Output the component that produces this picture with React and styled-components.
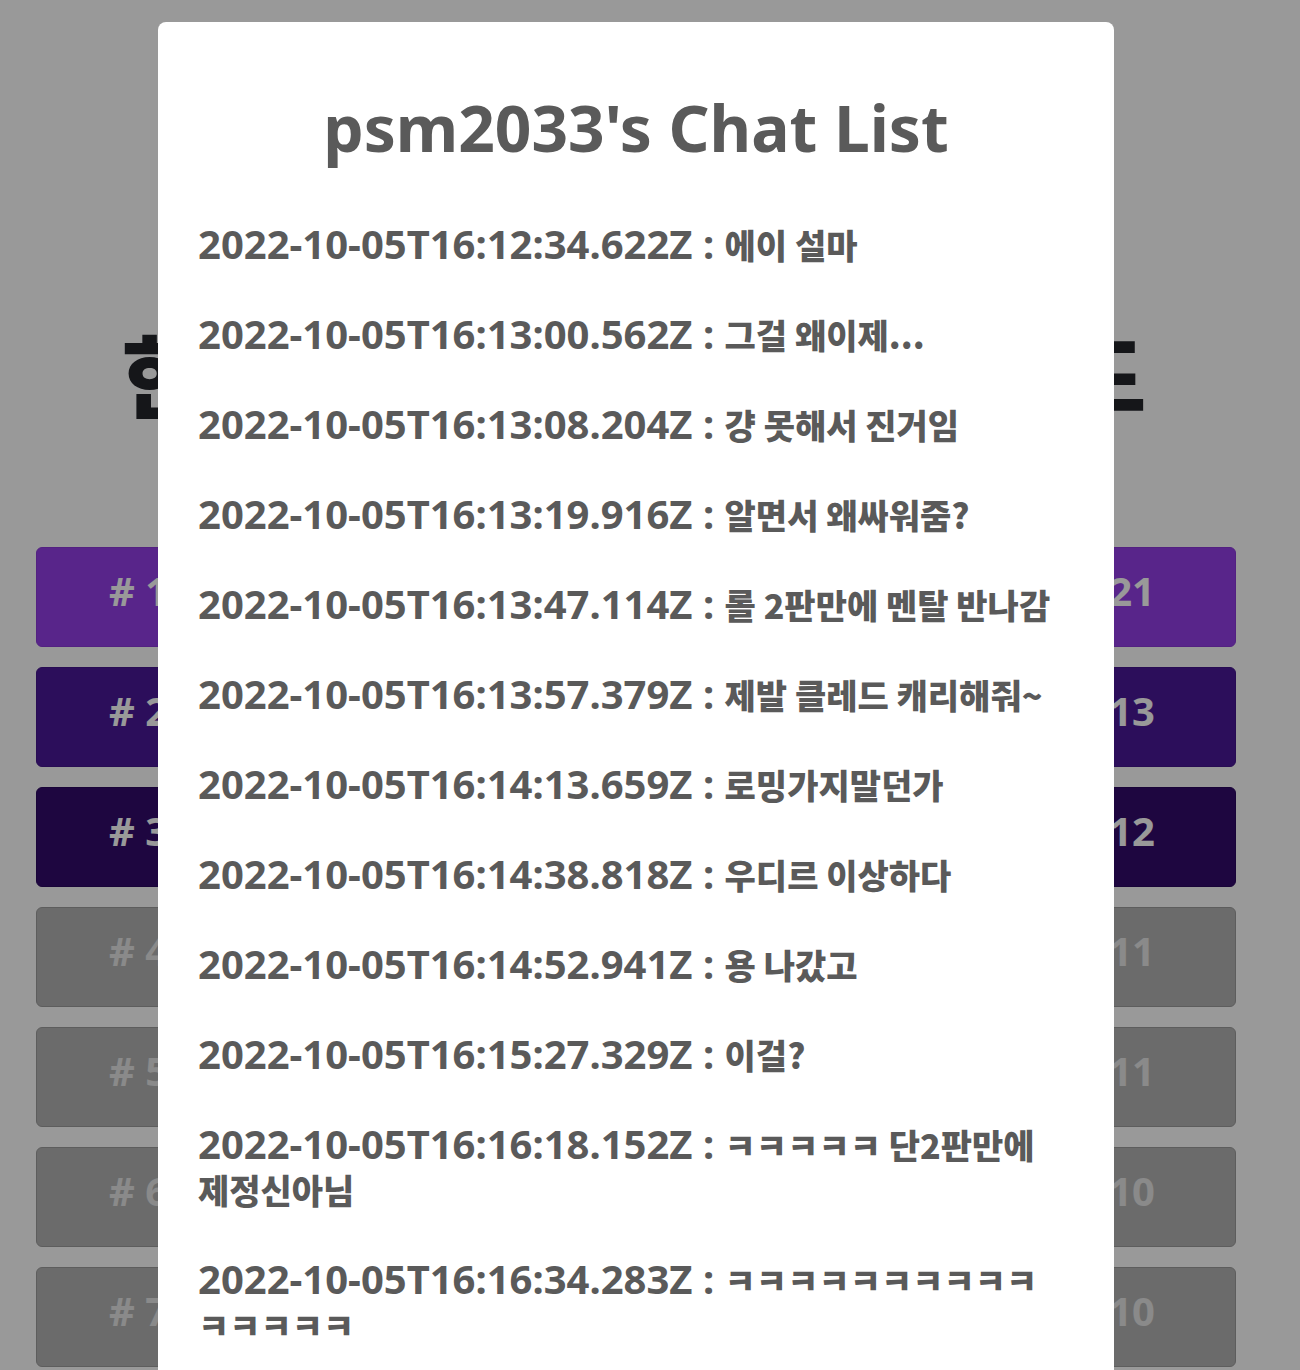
import React from "react";
import styled, { createGlobalStyle } from "styled-components";

const GlobalStyle = createGlobalStyle`
  html, body {
    margin: 0;
    padding: 0;
    background: #ffffff;
    font-family: "Noto Sans", "Noto Sans CJK KR", sans-serif;
  }
  * { box-sizing: border-box; }
`;

const ranks = [
  { rank: 1, name: "psm2033", count: 21, bg: "#933fe6", border: "#8a38d8", text: "#ffffff" },
  { rank: 2, name: "chovy_fan", count: 13, bg: "#4a1898", border: "#43158a", text: "#ffffff" },
  { rank: 3, name: "faker123", count: 12, bg: "#320a6b", border: "#2b085e", text: "#ffffff" },
  { rank: 4, name: "gumayusi", count: 11, bg: "#b3b3b3", border: "#9c9c9c", text: "#e6e6e6" },
  { rank: 5, name: "keria0", count: 11, bg: "#b3b3b3", border: "#9c9c9c", text: "#e6e6e6" },
  { rank: 6, name: "zeus_top", count: 10, bg: "#b3b3b3", border: "#9c9c9c", text: "#e6e6e6" },
  { rank: 7, name: "oner_jg", count: 10, bg: "#b3b3b3", border: "#9c9c9c", text: "#e6e6e6" },
];

const chats = [
  { time: "2022-10-05T16:12:34.622Z", msg: "에이 설마" },
  { time: "2022-10-05T16:13:00.562Z", msg: "그걸 왜이제..." },
  { time: "2022-10-05T16:13:08.204Z", msg: "걍 못해서 진거임" },
  { time: "2022-10-05T16:13:19.916Z", msg: "알면서 왜싸워줌?" },
  { time: "2022-10-05T16:13:47.114Z", msg: "롤 2판만에 멘탈 반나감" },
  { time: "2022-10-05T16:13:57.379Z", msg: "제발 클레드 캐리해줘~" },
  { time: "2022-10-05T16:14:13.659Z", msg: "로밍가지말던가" },
  { time: "2022-10-05T16:14:38.818Z", msg: "우디르 이상하다" },
  { time: "2022-10-05T16:14:52.941Z", msg: "용 나갔고" },
  { time: "2022-10-05T16:15:27.329Z", msg: "이걸?" },
  { time: "2022-10-05T16:16:18.152Z", msg: "ㅋㅋㅋㅋㅋ 단2판만에 제정신아님" },
  { time: "2022-10-05T16:16:34.283Z", msg: "ㅋㅋㅋㅋㅋㅋㅋㅋㅋㅋㅋㅋㅋㅋㅋ" },
];

const Page = styled.div`
  width: 1272px;
  padding: 319px 36px 40px;
`;

const Heading = styled.h1`
  margin: 0 0 122px;
  text-align: center;
  font-family: "Noto Sans CJK KR", sans-serif;
  font-size: 90px;
  line-height: 106px;
  font-weight: 900;
  letter-spacing: 4px;
  color: #23252b;
`;

const RankList = styled.div`
  display: flex;
  flex-direction: column;
  gap: 20px;
`;

const RankRow = styled.div`
  height: 100px;
  display: flex;
  align-items: center;
  justify-content: space-between;
  padding: 0 80px 13px 72px;
  border-radius: 6px;
  border: 1px solid ${(p) => p.$border};
  background: ${(p) => p.$bg};
  color: ${(p) => p.$text};
  font-size: 40px;
  font-weight: 700;
`;

const Overlay = styled.div`
  position: fixed;
  inset: 0;
  background: rgba(0, 0, 0, 0.4);
`;

const Modal = styled.div`
  position: fixed;
  top: 22px;
  left: 158px;
  width: 956px;
  height: 1500px;
  background: #ffffff;
  border-radius: 8px;
  padding: 66px 40px 0;
  color: #5a5a5a;
  overflow: hidden;
`;

const Title = styled.h2`
  margin: 0 0 53px;
  text-align: center;
  font-size: 64px;
  line-height: 80px;
  font-weight: 700;
`;

const ChatList = styled.div`
  padding-right: 14px;
`;

const ChatItem = styled.p`
  margin: 0 0 45px;
  font-size: 40px;
  line-height: 45px;
  font-weight: 700;
`;

const Message = styled.span`
  font-family: "Noto Sans CJK KR", sans-serif;
  font-size: 34px;
  line-height: 1;
  font-weight: 900;
`;

export default function App() {
  return (
    <>
      <GlobalStyle />
      <Page>
        <Heading>한국어 채팅 순위 리더보드</Heading>
        <RankList>
          {ranks.map((r) => (
            <RankRow key={r.rank} $bg={r.bg} $border={r.border} $text={r.text}>
              <span># {r.rank}</span>
              <span>{r.name}</span>
              <span>{r.count}</span>
            </RankRow>
          ))}
        </RankList>
      </Page>
      <Overlay />
      <Modal>
        <Title>psm2033's Chat List</Title>
        <ChatList>
          {chats.map((c) => (
            <ChatItem key={c.time}>
              {c.time} : <Message>{c.msg}</Message>
            </ChatItem>
          ))}
        </ChatList>
      </Modal>
    </>
  );
}
